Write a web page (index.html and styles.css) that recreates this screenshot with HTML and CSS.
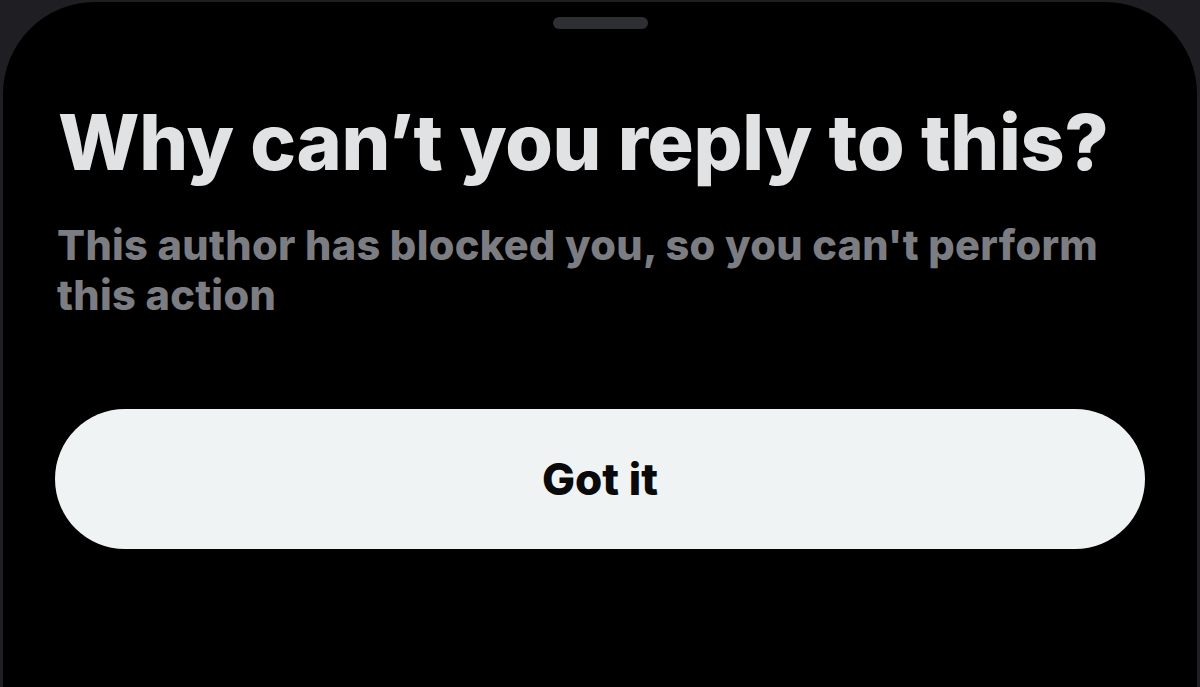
FILE: index.html
```html
<!DOCTYPE html>
<html>
<head>
    <title>Why can't you reply</title>
    <link rel="stylesheet" href="styles.css">
</head>
<body>
    <div class="sheet">
        <div class="handle"></div>
        <h1 class="title">Why can’t you reply to this?</h1>
        <p class="subtitle">This author has blocked you, so you can't perform this action</p>
        <button class="got-it">Got it</button>
    </div>
</body>
</html>
```

FILE: styles.css
```css
html, body {
    margin: 0;
    height: 100%;
}

body {
    font-family: Inter, "Noto Sans", sans-serif;
    background-color: #1f1f23;
    padding: 2px 3px 0 3px;
    box-sizing: border-box;
    overflow: hidden;
}

.sheet {
    background-color: #000;
    height: 100%;
    border-radius: 92px 92px 0 0;
    padding: 15px 52px 0 52px;
    box-sizing: border-box;
    display: flex;
    flex-direction: column;
}

.handle {
    width: 95px;
    height: 12px;
    border-radius: 6px;
    background-color: #2e2f33;
    align-self: center;
}

.title {
    margin: 68px 0 0 3px;
    font-size: 77px;
    font-weight: 800;
    letter-spacing: -0.3px;
    line-height: 90px;
    color: #e1e2e3;
}

.subtitle {
    margin: 33px 0 0 2px;
    font-size: 41.5px;
    font-weight: 800;
    letter-spacing: 0.3px;
    line-height: 50px;
    color: #7c7d82;
}

.got-it {
    margin-top: 89px;
    height: 140px;
    width: 100%;
    border: none;
    border-radius: 70px;
    background-color: #eff3f4;
    color: #0a0a0a;
    font-family: inherit;
    font-size: 44px;
    font-weight: 800;
}
```
